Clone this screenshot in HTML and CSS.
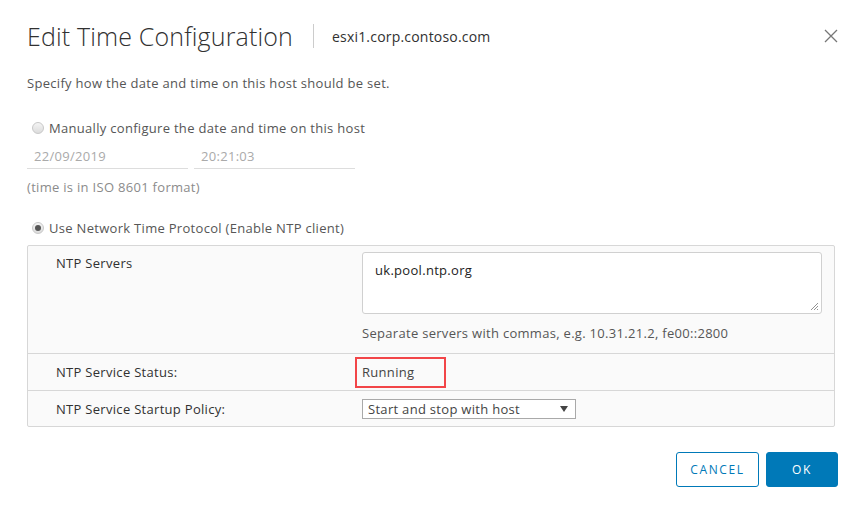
FILE: index.html
```html
<!DOCTYPE html>
<html>
<head>
<meta charset="utf-8">
<link rel="stylesheet" href="styles.css">
</head>
<body>
<div class="dialog">
  <header class="head">
    <h1 class="title">Edit Time Configuration</h1>
    <span class="sep"></span>
    <span class="host">esxi1.corp.contoso.com</span>
    <button class="close" aria-label="Close">
      <svg width="14" height="14" viewBox="0 0 14 14"><path d="M1 1L13 13M13 1L1 13" stroke="#777" stroke-width="1.3" fill="none"/></svg>
    </button>
  </header>
  <p class="intro">Specify how the date and time on this host should be set.</p>
  <label class="radio r1"><span class="dot"></span>Manually configure the date and time on this host</label>
  <div class="dt">
    <div class="field">22/09/2019</div>
    <div class="field">20:21:03</div>
  </div>
  <p class="note">(time is in ISO 8601 format)</p>
  <label class="radio r2"><span class="dot on"></span>Use Network Time Protocol (Enable NTP client)</label>
  <div class="panel">
    <div class="row servers">
      <div class="lbl">NTP Servers</div>
      <div class="val">
        <div class="ta">uk.pool.ntp.org
          <svg class="grip" width="9" height="9" viewBox="0 0 9 9"><path d="M8 1L1 8M8 4L4 8M8 7L7 8" stroke="#888" stroke-width="0.9"/></svg>
        </div>
        <div class="help">Separate servers with commas, e.g. 10.31.21.2, fe00::2800</div>
      </div>
    </div>
    <div class="row status">
      <div class="lbl">NTP Service Status:</div>
      <div class="val"><span class="running">Running</span></div>
    </div>
    <div class="row policy">
      <div class="lbl">NTP Service Startup Policy:</div>
      <div class="val"><div class="select">Start and stop with host<span class="arrow"></span></div></div>
    </div>
  </div>
  <footer class="foot">
    <button class="btn cancel">CANCEL</button>
    <button class="btn ok">OK</button>
  </footer>
</div>
</body>
</html>
```
FILE: styles.css
```css
* { box-sizing: border-box; }
html, body { margin: 0; background: #fff; }
body { font-family: "Open Sans", "Liberation Sans", sans-serif; color: #565656; font-size: 13px; letter-spacing: 0.3px; }
.dialog { width: 862px; height: 511px; padding: 0 24px 0 27px; }
.head { display: flex; align-items: center; height: 72px; padding-top: 0; }
.title { margin: 0; font-family: "Open Sans", "Liberation Sans", sans-serif; font-weight: 300; font-size: 25px; letter-spacing: 0.15px; color: #313131; line-height: 30px; }
.sep { width: 1px; height: 24px; background: #ccc; margin: 0 18px 0 20px; }
.host { font-size: 14px; color: #313131; letter-spacing: 0.2px; }
.close { margin-left: auto; margin-right: 0; background: none; border: 0; padding: 0; width: 14px; height: 14px; display: flex; }
.intro { margin: 3px 0 0; line-height: 16px; }
.radio { display: flex; align-items: center; line-height: 16px; }
.r1 { margin-top: 29px; padding-left: 5px; }
.r2 { margin-top: 25px; padding-left: 5px; }
.dot { width: 12px; height: 12px; border-radius: 50%; border: 1px solid #c8c8c8; background: linear-gradient(#f4f4f4, #dcdcdc); margin-right: 5px; position: relative; }
.dot.on::after { content: ""; position: absolute; left: 2px; top: 2px; width: 6px; height: 6px; border-radius: 50%; background: #555; }
.dt { display: flex; gap: 6px; margin-top: 12px; }
.field { width: 161px; height: 21px; border-bottom: 1px solid #ddd; color: #aaa; padding-left: 7px; line-height: 16px; }
.note { margin: 10px 0 0; color: #8b8b8b; line-height: 16px; }
.panel { margin-top: 9px; width: 808px; border: 1px solid #d7d7d7; border-radius: 2px; background: #fafafa; }
.row { display: flex; border-top: 1px solid #d7d7d7; }
.row:first-child { border-top: 0; }
.lbl { width: 334px; padding-left: 28px; color: #313131; }
.val { flex: 1; }
.servers { height: 107px; }
.servers .lbl { padding-top: 8px; }
.servers .val { padding-top: 6px; }
.ta { position: relative; width: 460px; height: 62px; background: #fff; border: 1px solid #d0d0d0; border-radius: 3px; padding: 9px 12px; color: #222; line-height: 16px; }
.grip { position: absolute; right: 2px; bottom: 2px; }
.help { margin-top: 11px; line-height: 16px; }
.status { height: 37px; align-items: center; }
.running { display: inline-block; margin-left: -7px; padding: 4px 0 5px 5px; width: 91px; height: 31px; border: 2px solid #f24548; line-height: 18px; color: #444; }
.policy { height: 36px; align-items: center; }
.select { position: relative; width: 214px; height: 20px; border: 1px solid #a9a9a9; background: #fff; padding-left: 5px; line-height: 18px; color: #444; }
.arrow { position: absolute; right: 7px; top: 6px; width: 0; height: 0; border-left: 4px solid transparent; border-right: 4px solid transparent; border-top: 6px solid #444; }
.foot { display: flex; justify-content: flex-end; gap: 7px; margin-top: 25px; padding-right: 0; }
.btn { height: 35px; border-radius: 3px; font-family: "Open Sans", "Liberation Sans", sans-serif; font-size: 12px; letter-spacing: 1.6px; border: 1px solid #0079b8; }
.cancel { width: 83px; background: #fff; color: #0079b8; }
.ok { width: 72px; background: #0079b8; color: #fff; }
```
